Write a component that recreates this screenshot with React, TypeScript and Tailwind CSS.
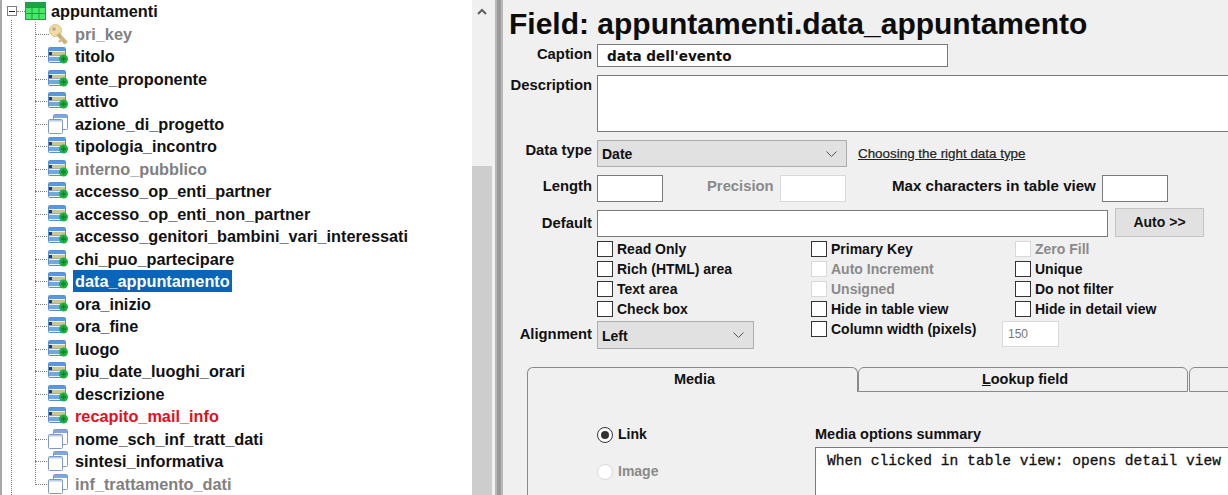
import React from "react";

type Kind = "key" | "field" | "win";
const rows: { n: string; k: Kind; c?: string }[] = [
  { n: "pri_key", k: "key", c: "text-[#808080]" },
  { n: "titolo", k: "field" },
  { n: "ente_proponente", k: "field" },
  { n: "attivo", k: "field" },
  { n: "azione_di_progetto", k: "win" },
  { n: "tipologia_incontro", k: "field" },
  { n: "interno_pubblico", k: "field", c: "text-[#808080]" },
  { n: "accesso_op_enti_partner", k: "field" },
  { n: "accesso_op_enti_non_partner", k: "field" },
  { n: "accesso_genitori_bambini_vari_interessati", k: "field" },
  { n: "chi_puo_partecipare", k: "field" },
  { n: "data_appuntamento", k: "field", c: "sel" },
  { n: "ora_inizio", k: "field" },
  { n: "ora_fine", k: "field" },
  { n: "luogo", k: "field" },
  { n: "piu_date_luoghi_orari", k: "field" },
  { n: "descrizione", k: "field" },
  { n: "recapito_mail_info", k: "field", c: "text-[#e01020]" },
  { n: "nome_sch_inf_tratt_dati", k: "win" },
  { n: "sintesi_informativa", k: "win" },
  { n: "inf_trattamento_dati", k: "win", c: "text-[#808080]" },
];

function Icon({ k }: { k: Kind }) {
  if (k === "key")
    return (
      <svg width="21" height="20" viewBox="0 0 21 20" className="shrink-0">
        <circle cx="7.5" cy="6.5" r="6" fill="#f0dca0" stroke="#d8c488" />
        <circle cx="6" cy="5" r="1.8" fill="#b0a898" />
        <path d="M10 10l8 9" stroke="#c8b078" strokeWidth="4" fill="none" />
        <path d="M15 14l-4 4M19 17l-3 3" stroke="#d0b880" strokeWidth="2.4" fill="none" />
      </svg>
    );
  if (k === "win")
    return (
      <svg width="21" height="20" viewBox="0 0 21 20" className="shrink-0">
        <rect x="5.5" y="0.5" width="14" height="15" rx="1" fill="#fff" stroke="#8098c8" />
        <rect x="6" y="1" width="13" height="3" fill="#80a8e0" />
        <rect x="0.5" y="5.5" width="14" height="14" rx="1" fill="#fff" stroke="#8098c8" />
        <rect x="1" y="6" width="13" height="1.5" fill="#b8cce8" />
      </svg>
    );
  return (
    <svg width="21" height="20" viewBox="0 -1 21 20" className="shrink-0">
      <rect x="0.5" y="0.5" width="17" height="15" rx="1" fill="#e8f0f8" stroke="#5890d0" />
      <rect x="1" y="1" width="16" height="3" fill="#5898e0" />
      <rect x="1" y="5" width="16" height="3.5" fill="#283878" />
      <rect x="4" y="5" width="13" height="3.5" fill="#c8c890" />
      <rect x="1" y="10" width="16" height="4" fill="#70a8e0" />
      <circle cx="15.5" cy="12" r="4.5" fill="#20b040" />
      <path d="M15.5 9.5v5M13 12h5" stroke="#108030" strokeWidth="1.4" />
    </svg>
  );
}

function Row({ r }: { r: (typeof rows)[number] }) {
  const sel = r.c === "sel";
  return (
    <div className="relative flex h-[22.5px] items-center pl-[47px]">
      <div className="absolute left-[33px] top-1/2 w-[14px] border-t border-dotted border-[#808080]" />
      <div className="z-10 -ml-[1px] w-[25px]">
        <Icon k={r.k} />
      </div>
      <span
        className={
          "z-10 whitespace-nowrap px-[2px] leading-[22px] " +
          (sel ? "bg-[#0a64b8] text-white" : r.c ?? "text-[#111]")
        }
      >
        {r.n}
      </span>
    </div>
  );
}

function Box({ className = "", children }: { className?: string; children?: React.ReactNode }) {
  return <div className={"shrink-0 border border-[#7a7a7a] bg-white " + className}>{children}</div>;
}
function Dis({ className = "", children }: { className?: string; children?: React.ReactNode }) {
  return <div className={"shrink-0 border border-[#d9d9d9] bg-white " + className}>{children}</div>;
}
function Sel({ w, h, t }: { w: string; h: string; t: string }) {
  return (
    <div className={"flex shrink-0 items-center justify-between border border-[#adadad] bg-[#e1e1e1] pl-[4px] pr-[9px] " + w + " " + h}>
      <span className="pt-[2px] text-[14px]">{t}</span>
      <svg width="11" height="6" viewBox="0 0 11 6"><path d="M0.5 0.5l5 5 5-5" fill="none" stroke="#555" /></svg>
    </div>
  );
}
function Lbl({ children, className = "" }: { children: React.ReactNode; className?: string }) {
  return <div className={"w-[87px] shrink-0 whitespace-nowrap text-right " + className}>{children}</div>;
}
function Chk({ t, off }: { t: string; off?: boolean }) {
  return (
    <div className={"flex h-[20px] items-center gap-[4px] " + (off ? "text-[#8a8a8a]" : "text-[#111]")}>
      <span className={"h-[16px] w-[16px] shrink-0 border bg-white " + (off ? "border-[#d9d9d9]" : "border-[#333]")} />
      <span className="whitespace-nowrap">{t}</span>
    </div>
  );
}

export default function App() {
  return (
    <div
      className="flex h-[495px] w-[1228px] overflow-hidden bg-[#f0f0f0] text-[14.8px] font-bold text-[#111]"
      style={{ fontFamily: '"Liberation Sans", Arial, sans-serif' }}
    >
      {/* tree */}
      <div className="flex w-[472px] shrink-0 border-l-2 border-[#a8a8a8] bg-white">
        <div className="relative w-full text-[16.3px]">
          <div className="absolute bottom-0 left-[9px] top-[20px] border-l border-dotted border-[#808080]" />
          <div className="absolute left-[33px] top-[22px] h-[463px] border-l border-dotted border-[#808080]" />
          <div className="relative flex h-[22.5px] items-center pl-[5px]">
            <span className="flex h-[10px] w-[10px] items-center justify-center border border-[#808080] bg-white">
              <span className="h-[1px] w-[6px] bg-[#222]" />
            </span>
            <span className="h-0 w-[8px] border-t border-dotted border-[#808080]" />
            <svg width="21" height="18" viewBox="0 0 21 18" className="mr-[5px] shrink-0">
              <rect x="0.5" y="0.5" width="20" height="17" fill="#48e868" stroke="#20a040" />
              <rect x="1" y="1" width="19" height="4" fill="#20a048" />
              <path d="M0 5.5h21M0 11.5h21M7 0v18M14 0v18" stroke="#18a038" strokeWidth="1" />
            </svg>
            <span className="text-[#111]">appuntamenti</span>
          </div>
          {rows.map((r) => (
            <Row key={r.n} r={r} />
          ))}
        </div>
      </div>
      {/* scrollbar */}
      <div className="flex w-[20px] shrink-0 flex-col bg-[#f0f0f0]">
        <div className="flex h-[166px] justify-center pt-[8px]">
          <svg width="10" height="7" viewBox="0 0 10 7"><path d="M1 6l4-4 4 4" fill="none" stroke="#606060" strokeWidth="2" /></svg>
        </div>
        <div className="flex-1 bg-[#cdcdcd]" />
      </div>
      {/* splitter */}
      <div className="ml-[3px] w-[8px] shrink-0 border-x-2 border-[#b8b8b8] bg-[#9a9a9a]" />
      {/* form */}
      <div className="min-w-0 flex-1 overflow-hidden pl-[2px]">
        <div className="h-[44px] whitespace-nowrap pl-[4px] pt-[7px] text-[30px] leading-[33px] text-[#0c0c0c]">
          Field: appuntamenti.data_appuntamento
        </div>
        <div className="flex h-[23px] items-center gap-[5px]">
          <Lbl className="pb-[2px]">Caption</Lbl>
          <Box className="flex h-[23px] w-[351px] items-center pl-[9px] pt-[1px]">
            <span style={{ fontFamily: '"DejaVu Sans", sans-serif', fontSize: "13.6px" }}>data dell'evento</span>
          </Box>
        </div>
        <div className="mt-[8px] flex h-[57px] gap-[5px]">
          <Lbl className="-mt-[1px]">Description</Lbl>
          <Box className="h-[57px] w-[720px]" />
        </div>
        <div className="mt-[8px] flex h-[27px] items-center gap-[5px]">
          <Lbl className="pb-[6px]">Data type</Lbl>
          <Sel w="w-[250px]" h="h-[27px]" t="Date" />
          <span className="ml-[6px] pt-[1px] text-[13.4px] font-normal text-[#222] underline [-webkit-text-stroke:0.2px]">Choosing the right data type</span>
        </div>
        <div className="mt-[8px] flex h-[27px] items-center gap-[5px]">
          <Lbl className="pb-[5px]">Length</Lbl>
          <Box className="h-[27px] w-[66px]" />
          <span className="ml-[39px] w-[68px] whitespace-nowrap pb-[5px] text-[#8a8a8a]">Precision</span>
          <Dis className="h-[27px] w-[66px]" />
          <span className="ml-[41px] w-[205px] whitespace-nowrap pb-[5px] text-[15.1px]">Max characters in table view</span>
          <Box className="h-[27px] w-[66px]" />
        </div>
        <div className="mt-[6px] flex h-[29px] items-end gap-[5px]">
          <Lbl className="pb-[3px]">Default</Lbl>
          <Box className="h-[27px] w-[511px]" />
          <div className="ml-[2px] flex h-[29px] w-[89px] shrink-0 items-center justify-center border border-[#c4c4c4] bg-[#e1e1e1] text-[14px]">
            Auto &gt;&gt;
          </div>
        </div>
        <div className="mt-[2px] grid w-[720px] grid-cols-[214px_204px_1fr] pl-[92px] text-[14px]">
          <Chk t="Read Only" />
          <Chk t="Primary Key" />
          <Chk t="Zero Fill" off />
          <Chk t="Rich (HTML) area" />
          <Chk t="Auto Increment" off />
          <Chk t="Unique" />
          <Chk t="Text area" />
          <Chk t="Unsigned" off />
          <Chk t="Do not filter" />
          <Chk t="Check box" />
          <Chk t="Hide in table view" />
          <Chk t="Hide in detail view" />
        </div>
        <div className="mt-[2px] flex h-[28px] items-start gap-[5px]">
          <Lbl className="pt-[2px]">Alignment</Lbl>
          <Sel w="w-[157px]" h="h-[28px]" t="Left" />
          <div className="-mt-[2px] ml-[52px] w-[172px] text-[14px]">
            <Chk t="Column width (pixels)" />
          </div>
          <Dis className="ml-[14px] flex h-[26px] w-[57px] items-center pl-[5px] text-[12px] font-normal text-[#777]">150</Dis>
        </div>
        {/* tabs */}
        <div className="ml-[22px] mt-[18px] h-[128px] w-[720px] text-[14.5px]">
          <div className="flex h-[25px]">
            <div className="flex h-[25px] w-[331px] shrink-0 justify-center rounded-t-[6px] border-x border-t border-[#8a8a8a] pl-[4px] pt-[1px]">Media</div>
            <div className="flex h-[25px] w-[330px] shrink-0 items-center justify-center rounded-t-[6px] border border-[#8a8a8a] pl-[4px]">
              <span><span className="underline">L</span>ookup field</span>
            </div>
            <div className="ml-[1px] h-[25px] w-[60px] shrink-0 rounded-t-[6px] border border-[#8a8a8a]" />
          </div>
          <div className="flex h-[103px] border-l border-[#8a8a8a]">
            <div className="w-[69px] shrink-0" />
            <div className="w-[218px] shrink-0 pt-[32px] text-[14px]">
              <div className="flex items-center gap-[5px]">
                <span className="flex h-[16px] w-[16px] items-center justify-center rounded-full border border-[#333] bg-white">
                  <span className="h-[8px] w-[8px] rounded-full bg-[#333]" />
                </span>
                Link
              </div>
              <div className="mt-[16px] flex items-center gap-[5px] text-[#8a8a8a]">
                <span className="h-[16px] w-[16px] rounded-full border border-[#d9d9d9] bg-white" />
                Image
              </div>
            </div>
            <div className="min-w-0 flex-1 pt-[34px]">
              <div className="h-[21px] leading-[17px]">Media options summary</div>
              <div className="h-[60px] whitespace-nowrap border-l border-t border-[#7a7a7a] bg-white pl-[11px] pt-[3px] text-[14.6px] font-normal [-webkit-text-stroke:0.3px]" style={{ fontFamily: '"Liberation Mono", monospace' }}>
                When clicked in table view: opens detail view
              </div>
            </div>
          </div>
        </div>
      </div>
    </div>
  );
}
